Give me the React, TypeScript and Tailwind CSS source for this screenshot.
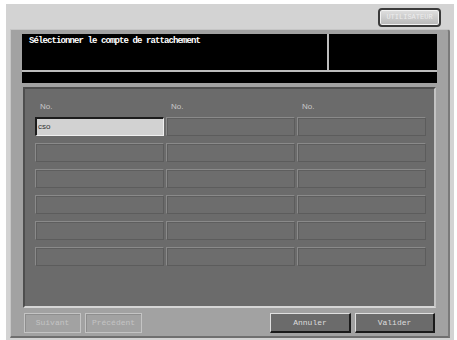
import React from "react";

const mono = { fontFamily: '"Liberation Mono", "DejaVu Sans Mono", monospace' };
const sans = { fontFamily: '"Liberation Sans", Arial, sans-serif' };

const rows = [
  ["cso", "", ""],
  ["", "", ""],
  ["", "", ""],
  ["", "", ""],
  ["", "", ""],
  ["", "", ""],
];

const Cell = ({ value, selected }: { value: string; selected: boolean }) =>
  selected ? (
    <div
      className="h-[19px] bg-[#d2d2d2] border-t-2 border-l-2 border-t-[#1c1c1c] border-l-[#1c1c1c] border-b border-r border-b-[#f0f0f0] border-r-[#f0f0f0] flex items-center pl-[1px] text-[8px] text-[#333]"
      style={sans}
    >
      {value}
    </div>
  ) : (
    <div className="h-[19px] bg-[#6d6d6d] border border-t-[#8a8a8a] border-l-[#8a8a8a] border-b-[#5c5c5c] border-r-[#5c5c5c] shadow-[inset_1px_1px_0_#5e5e5e]" />
  );

const App = () => {
  return (
    <div className="w-[457px] h-[340px] bg-white pl-[6px] pt-[4px] pr-[3px] overflow-hidden">
      <div className="h-full bg-[#d3d3d3] flex flex-col">
        {/* top bar */}
        <div className="h-[25px] flex justify-end items-start pt-[4px] pr-[13px]">
          <button
            className="w-[63px] h-[19px] rounded-[4px] border-2 border-[#3a3a3a] bg-gradient-to-b from-[#e0e0e0] to-[#b8b8b8] shadow-[inset_0_0_0_1px_#f2f2f2] text-[7px] text-[#ededed] font-normal flex items-center justify-center"
            style={mono}
          >
            UTILISATEUR
          </button>
        </div>

        {/* main panel */}
        <div className="flex-1 mx-[4px] mb-[2px] bg-[#a2a2a2] border-t border-l border-t-[#c6c6c6] border-l-[#c6c6c6] border-r-2 border-b-2 border-r-[#7a7a7a] border-b-[#6f6f6f] rounded-tr-[3px] flex flex-col px-[11px] pt-[4px]">
          {/* header */}
          <div className="bg-black flex flex-col">
            <div className="h-[36px] flex">
              <div
                className="flex-1 text-white text-[9px] font-bold tracking-[-0.9px] pl-[7px] pt-[2px] leading-[10px]"
                style={mono}
              >
                Sélectionner le compte de rattachement
              </div>
              <div className="w-[2px] bg-[#bdbdbd]" />
              <div className="w-[108px]" />
            </div>
            <div className="h-[2px] bg-[#bdbdbd]" />
            <div className="h-[11px]" />
          </div>

          {/* list area */}
          <div className="mt-[4px] mx-[1px] h-[221px] bg-[#6b6b6b] border-t-2 border-l-2 border-t-[#4e4e4e] border-l-[#4e4e4e] border-b-2 border-r-2 border-b-[#d6d6d6] border-r-[#c2c2c2] px-[10px] pt-[9px]">
            <div className="grid grid-cols-[129px_129px_129px] gap-x-[2px]">
              {["No.", "No.", "No."].map((l, i) => (
                <div
                  key={i}
                  className="h-[19px] pl-[5px] pt-[3px] text-[8px] text-[#c8c8c8]"
                  style={sans}
                >
                  {l}
                </div>
              ))}
            </div>
            <div className="grid grid-cols-[129px_129px_129px] gap-x-[2px] gap-y-[7px]">
              {rows.map((r, ri) =>
                r.map((v, ci) => (
                  <Cell key={`${ri}-${ci}`} value={v} selected={ri === 0 && ci === 0} />
                ))
              )}
            </div>
          </div>

          {/* bottom buttons */}
          <div className="flex items-start mt-[5px] pl-[2px] gap-[4px]">
            <button
              className="w-[57px] h-[20px] border border-[#c4c4c4] shadow-[inset_1px_1px_0_#8e8e8e] text-[8px] font-normal text-[#c4c4c4]"
              style={mono}
            >
              Suivant
            </button>
            <button
              className="w-[57px] h-[20px] border border-[#c4c4c4] shadow-[inset_1px_1px_0_#8e8e8e] text-[8px] font-normal text-[#c4c4c4]"
              style={mono}
            >
              Précédent
            </button>
            <div className="flex-1" />
            <button
              className="w-[81px] h-[20px] bg-[#6b6b6b] border border-t-[#e0e0e0] border-l-[#e0e0e0] border-b-2 border-r-2 border-b-[#1a1a1a] border-r-[#1a1a1a] text-[8px] font-normal text-[#dcdcdc]"
              style={mono}
            >
              Annuler
            </button>
            <button
              className="w-[80px] h-[20px] bg-[#6b6b6b] border border-t-[#e0e0e0] border-l-[#e0e0e0] border-b-2 border-r-2 border-b-[#1a1a1a] border-r-[#1a1a1a] text-[8px] font-normal text-[#dcdcdc] mr-[2px]"
              style={mono}
            >
              Valider
            </button>
          </div>
        </div>
      </div>
    </div>
  );
};

export default App;
